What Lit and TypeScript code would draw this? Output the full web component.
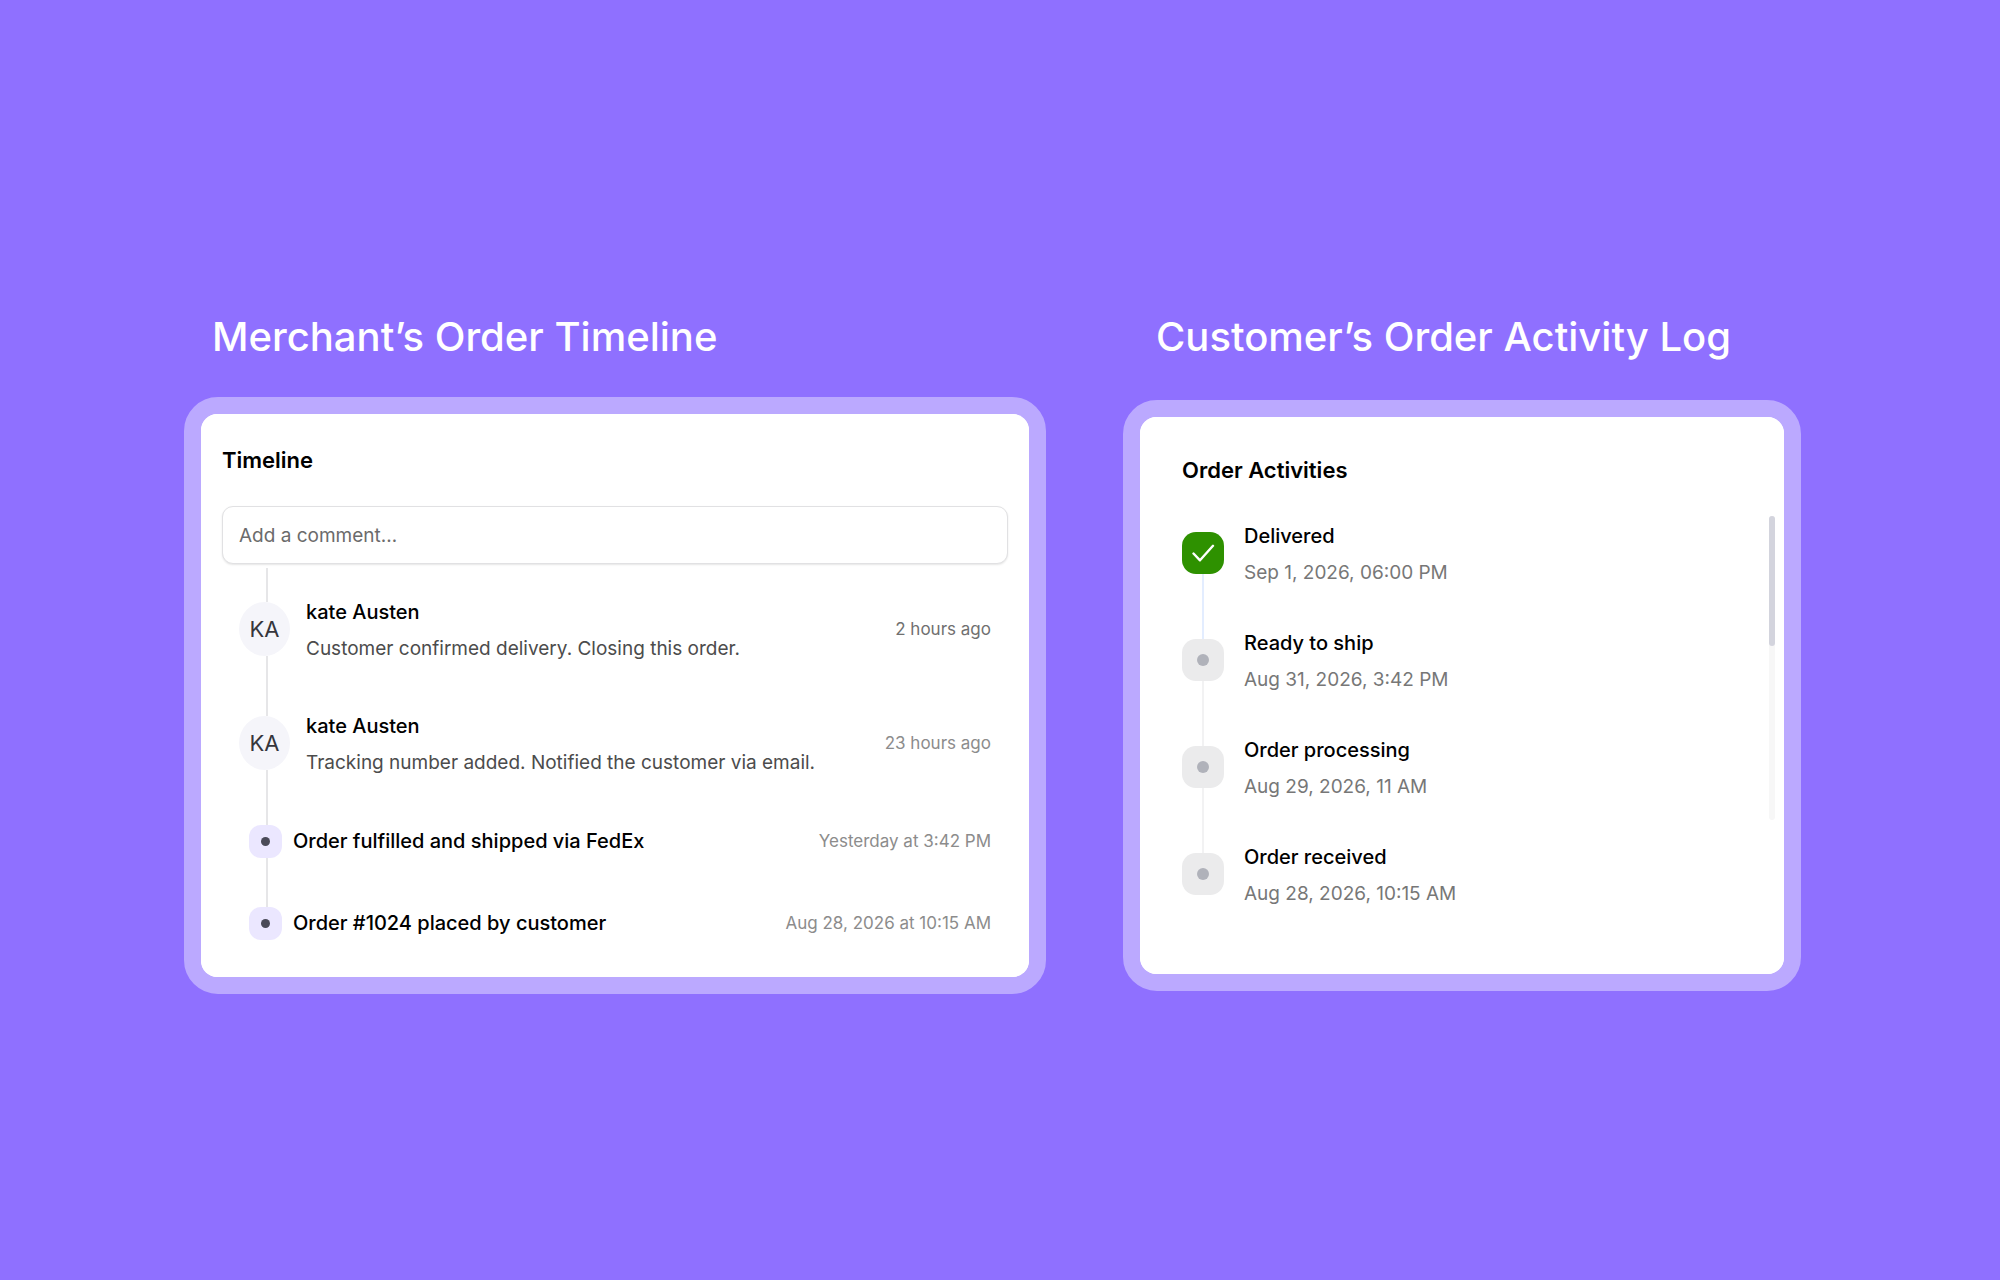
import { LitElement, html, css, svg } from "lit";
import { customElement } from "lit/decorators.js";

interface Comment { initials: string; author: string; text: string; time: string; recent?: boolean }
interface OrderEvent { title: string; time: string }
interface Activity { title: string; date: string; done?: boolean }

const comments: Comment[] = [
  { initials: "KA", author: "kate Austen", text: "Customer confirmed delivery. Closing this order.", time: "2 hours ago", recent: true },
  { initials: "KA", author: "kate Austen", text: "Tracking number added. Notified the customer via email.", time: "23 hours ago" },
];

const events: OrderEvent[] = [
  { title: "Order fulfilled and shipped via FedEx", time: "Yesterday at 3:42 PM" },
  { title: "Order #1024 placed by customer", time: "Aug 28, 2026 at 10:15 AM" },
];

const activities: Activity[] = [
  { title: "Delivered", date: "Sep 1, 2026, 06:00 PM", done: true },
  { title: "Ready to ship", date: "Aug 31, 2026, 3:42 PM" },
  { title: "Order processing", date: "Aug 29, 2026, 11 AM" },
  { title: "Order received", date: "Aug 28, 2026, 10:15 AM" },
];

const shared = css`
  :host { display: block; }
  * { box-sizing: border-box; }
  h2, p, ol { margin: 0; padding: 0; }
  ol { list-style: none; }
  .card { background: #fff; border: 17px solid #bba9ff; border-radius: 34px; }
  .inner { background: #fff; border-radius: 16px; }
  .card-title { font-size: 22px; line-height: 28px; font-weight: 600; color: #000; }
  .name { font-size: 20px; line-height: 28px; font-weight: 500; color: #000; }
`;

@customElement("merchant-timeline")
export class MerchantTimeline extends LitElement {
  static styles = [shared, css`
    .inner { padding: 32px 21px 36px; }
    .comment-box {
      display: block; width: 100%; height: 58px; margin-top: 32px; padding: 0 16px;
      border: 1px solid #e1e1e3; border-radius: 11px; background: #fff;
      box-shadow: 0 1px 2px rgba(0, 0, 0, 0.1);
      font: 400 19px/24px Inter, sans-serif; color: #333; outline: none;
    }
    .comment-box::placeholder { color: #6b6b6b; opacity: 1; }
    .list { padding: 4px 17px 0 18px; }
    .row { display: grid; grid-template-columns: 53px 1fr auto; }
    .rail { display: flex; flex-direction: column; align-items: center; }
    .rail::before, .rail::after { content: ""; width: 2px; background: #e6e6e8; }
    .comment .rail::before { height: 34px; }
    .comment + .comment .rail::before { height: 30px; }
    .rail::after { flex: 1; }
    .avatar {
      display: grid; place-items: center; width: 51px; height: 54px; margin-right: 4px; border-radius: 50%;
      background: #f5f5fa; color: #36363c; font-size: 22px; line-height: 28px;
    }
    .comment { height: 118px; }
    .comment + .comment { height: 114px; }
    .body { padding: 30px 0 0 13px; }
    .comment + .comment .body { padding-top: 26px; }
    .text { margin-top: 9px; font-size: 19px; line-height: 28px; color: #4c4c4c; }
    .time { align-self: start; font-size: 17px; line-height: 24px; color: #8c8c8c; }
    .comment .time { margin-top: 49px; }
    .comment + .comment .time { margin-top: 45px; }
    .comment .recent { color: #707070; }
    .event { height: 82px; }
    .event .rail::before { height: 25px; }
    .event:last-child { height: 59px; }
    .event:last-child .rail::after { content: none; }
    .badge {
      display: grid; place-items: center; width: 33px; height: 33px; margin-right: 2px;
      border-radius: 12px; background: #ebe7ff;
    }
    .dot { width: 9px; height: 9px; border-radius: 50%; background: #4a4a58; }
    .event .name { padding-top: 27px; }
    .event .time { padding-top: 29px; }
  `];

  render() {
    return html`
      <div class="card"><section class="inner">
        <h2 class="card-title">Timeline</h2>
        <input class="comment-box" type="text" aria-label="Add a comment" placeholder="Add a comment…" />
        <ol class="list">
          ${comments.map((c) => html`
            <li class="row comment">
              <div class="rail"><span class="avatar">${c.initials}</span></div>
              <div class="body">
                <p class="name">${c.author}</p>
                <p class="text">${c.text}</p>
              </div>
              <time class="time ${c.recent ? "recent" : ""}">${c.time}</time>
            </li>`)}
          ${events.map((e) => html`
            <li class="row event">
              <div class="rail"><span class="badge"><span class="dot"></span></span></div>
              <p class="name">${e.title}</p>
              <time class="time">${e.time}</time>
            </li>`)}
        </ol>
      </section></div>`;
  }
}

@customElement("activity-log")
export class ActivityLog extends LitElement {
  static styles = [shared, css`
    .inner { padding: 39px 9px 30px 42px; }
    .content { display: flex; justify-content: space-between; margin-top: 32px; }
    .row { display: flex; gap: 20px; height: 107px; }
    .rail { display: flex; flex-direction: column; align-items: center; padding-top: 16px; margin-bottom: -16px; }
    .rail::after { content: ""; flex: 1; width: 2px; background: #f2f2f3; }
    .done::after { background: #e3edff; }
    .row:last-child .rail::after { content: none; }
    .marker {
      display: grid; place-items: center; width: 42px; height: 42px;
      border-radius: 14px; background: #ebebec;
    }
    .done .marker { background: #2e9100; }
    .dot { width: 12px; height: 12px; border-radius: 50%; background: #b0b2ba; }
    .body { padding-top: 6px; }
    .date { margin-top: 9px; font-size: 19px; line-height: 28px; color: #777; }
    .track { width: 6px; height: 304px; border-radius: 3px; background: #f7f7f7; }
    .thumb { height: 130px; border-radius: 3px; background: #d3d4dd; }
  `];

  render() {
    const check = svg`<path d="M1.5 9.5 L8 16.3 L21 1.8" fill="none" stroke="#fff" stroke-width="2.4" stroke-linecap="round" stroke-linejoin="round" />`;
    return html`
      <div class="card"><section class="inner">
        <h2 class="card-title">Order Activities</h2>
        <div class="content">
          <ol>
            ${activities.map((a) => html`
              <li class="row">
                <div class="rail ${a.done ? "done" : ""}">
                  <span class="marker">
                    ${a.done
                      ? html`<svg width="23" height="18" viewBox="0 0 23 18" aria-hidden="true">${check}</svg>`
                      : html`<span class="dot"></span>`}
                  </span>
                </div>
                <div class="body">
                  <p class="name">${a.title}</p>
                  <p class="date">${a.date}</p>
                </div>
              </li>`)}
          </ol>
          <div class="track" aria-hidden="true"><div class="thumb"></div></div>
        </div>
      </section></div>`;
  }
}

@customElement("app-root")
export class AppRoot extends LitElement {
  static styles = css`
    :host { display: block; min-height: 100vh; background: #8f70ff; font-family: Inter, "Liberation Sans", sans-serif; }
    .page {
      display: grid; grid-template-columns: 862fr 678fr; column-gap: 77px; align-items: start;
      padding: 311px 199px 0 184px;
    }
    .heading { margin: 0; padding-left: 28px; font-size: 40px; line-height: 52px; font-weight: 500; color: #fff; }
    .column { display: grid; gap: 34px; }
    .column + .column { gap: 37px; }
    .column + .column .heading { padding-left: 33px; }
  `;

  render() {
    return html`
      <main class="page">
        <div class="column">
          <h1 class="heading">Merchant’s Order Timeline</h1>
          <merchant-timeline></merchant-timeline>
        </div>
        <div class="column">
          <h1 class="heading">Customer’s Order Activity Log</h1>
          <activity-log></activity-log>
        </div>
      </main>`;
  }
}
